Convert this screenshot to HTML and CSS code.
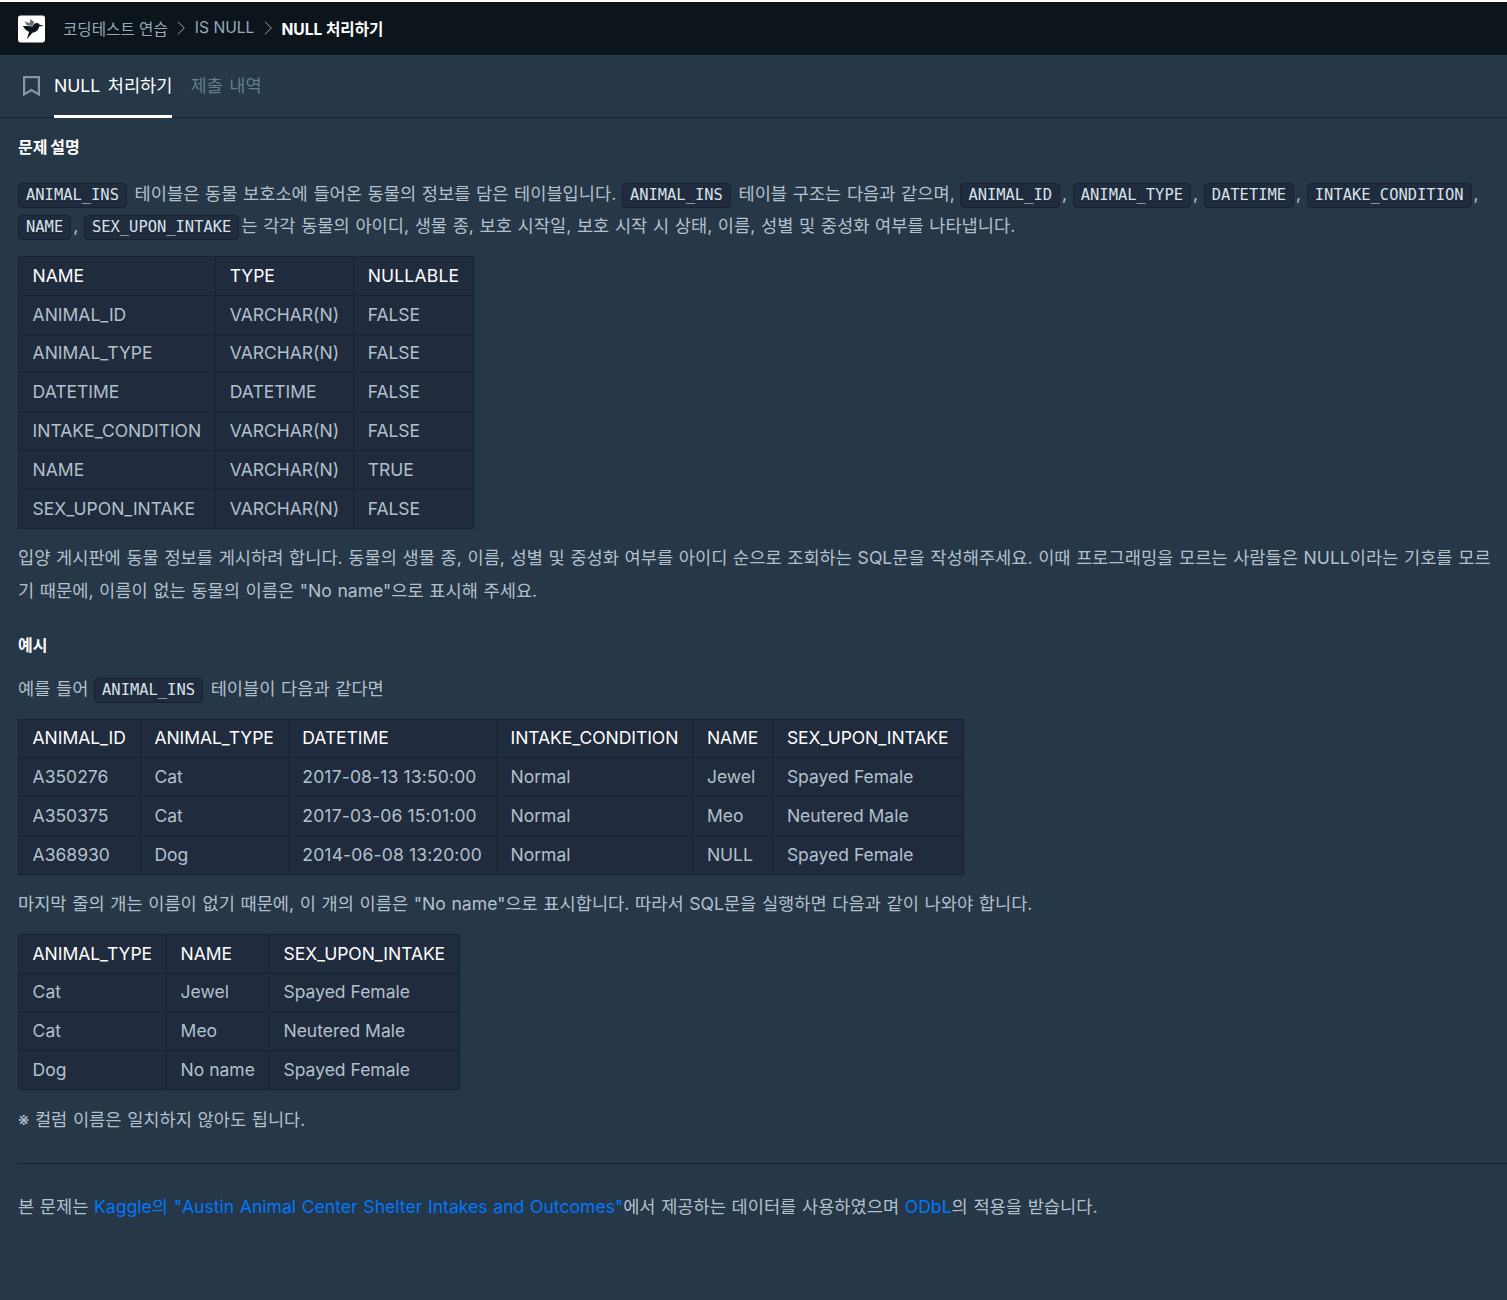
FILE: index.html
```html
<!DOCTYPE html>
<html lang="ko">
<head>
<meta charset="utf-8">
<title>NULL 처리하기</title>
<link rel="stylesheet" href="styles.css">
</head>
<body>
<header class="topbar">
  <svg class="logo" width="27" height="28" viewBox="0 0 28 28"><rect width="28" height="28" rx="2.5" fill="#fff"/><path d="M7 6 L12 8 L13 3.5 L17 7 L15 11 L9 10 Z" fill="#66727e"/><path d="M5 11 C8 11 12 11 15 11.5 C16 9 18 7.5 20 7.8 C21.5 8 22 9 22.5 9.5 L27 10.5 L22 11.5 C21.5 15 19 17.5 15 18 L9 24.5 L11.5 17 C8.5 16 6.5 13.5 5 11 Z" fill="#0c151c"/></svg>
  <nav class="crumbs">
    <span class="crumb">코딩테스트 연습</span>
    <svg class="chev" width="8" height="14" viewBox="0 0 8 14"><path d="M1 .7 L7.3 7 L1 13.3" fill="none" stroke="#98a8b9" stroke-width="1"/></svg>
    <span class="crumb">IS NULL</span>
    <svg class="chev" width="8" height="14" viewBox="0 0 8 14"><path d="M1 .7 L7.3 7 L1 13.3" fill="none" stroke="#98a8b9" stroke-width="1"/></svg>
    <span class="crumb current">NULL 처리하기</span>
  </nav>
</header>
<div class="tabs">
  <svg class="bookmark" width="17" height="20" viewBox="0 0 17 20"><path d="M1.1 1.1 H15.9 V18.4 L8.5 14 L1.1 18.4 Z" fill="none" stroke="#8297a7" stroke-width="2.2"/></svg>
  <div class="tab active">NULL 처리하기</div>
  <div class="tab">제출 내역</div>
</div>
<main class="content">
  <h5 class="heading first">문제 설명</h5>
  <p class="para lead"><code>ANIMAL_INS</code> 테이블은 동물 보호소에 들어온 동물의 정보를 담은 테이블입니다. <code>ANIMAL_INS</code> 테이블 구조는 다음과 같으며, <code>ANIMAL_ID</code>, <code>ANIMAL_TYPE</code>, <code>DATETIME</code>, <code>INTAKE_CONDITION</code>, <code>NAME</code>, <code>SEX_UPON_INTAKE</code>는 각각 동물의 아이디, 생물 종, 보호 시작일, 보호 시작 시 상태, 이름, 성별 및 중성화 여부를 나타냅니다.</p>
  <table class="tbl">
    <thead><tr><th>NAME</th><th>TYPE</th><th class="wide">NULLABLE</th></tr></thead>
    <tbody>
      <tr><td>ANIMAL_ID</td><td>VARCHAR(N)</td><td>FALSE</td></tr>
      <tr><td>ANIMAL_TYPE</td><td>VARCHAR(N)</td><td>FALSE</td></tr>
      <tr><td>DATETIME</td><td>DATETIME</td><td>FALSE</td></tr>
      <tr><td>INTAKE_CONDITION</td><td>VARCHAR(N)</td><td>FALSE</td></tr>
      <tr><td>NAME</td><td>VARCHAR(N)</td><td>TRUE</td></tr>
      <tr><td>SEX_UPON_INTAKE</td><td>VARCHAR(N)</td><td>FALSE</td></tr>
    </tbody>
  </table>
  <p class="para">입양 게시판에 동물 정보를 게시하려 합니다. 동물의 생물 종, 이름, 성별 및 중성화 여부를 아이디 순으로 조회하는 SQL문을 작성해주세요. 이때 프로그래밍을 모르는 사람들은 NULL이라는 기호를 모르기 때문에, 이름이 없는 동물의 이름은 "No name"으로 표시해 주세요.</p>
  <h5 class="heading">예시</h5>
  <p class="para lead">예를 들어 <code>ANIMAL_INS</code> 테이블이 다음과 같다면</p>
  <table class="tbl">
    <thead><tr><th>ANIMAL_ID</th><th>ANIMAL_TYPE</th><th>DATETIME</th><th>INTAKE_CONDITION</th><th>NAME</th><th>SEX_UPON_INTAKE</th></tr></thead>
    <tbody>
      <tr><td>A350276</td><td>Cat</td><td class="dt">2017-08-13 13:50:00</td><td>Normal</td><td>Jewel</td><td>Spayed Female</td></tr>
      <tr><td>A350375</td><td>Cat</td><td class="dt">2017-03-06 15:01:00</td><td>Normal</td><td>Meo</td><td>Neutered Male</td></tr>
      <tr><td>A368930</td><td>Dog</td><td class="dt">2014-06-08 13:20:00</td><td>Normal</td><td>NULL</td><td>Spayed Female</td></tr>
    </tbody>
  </table>
  <p class="para">마지막 줄의 개는 이름이 없기 때문에, 이 개의 이름은 "No name"으로 표시합니다. 따라서 SQL문을 실행하면 다음과 같이 나와야 합니다.</p>
  <table class="tbl">
    <thead><tr><th>ANIMAL_TYPE</th><th>NAME</th><th>SEX_UPON_INTAKE</th></tr></thead>
    <tbody>
      <tr><td>Cat</td><td>Jewel</td><td>Spayed Female</td></tr>
      <tr><td>Cat</td><td>Meo</td><td>Neutered Male</td></tr>
      <tr><td>Dog</td><td>No name</td><td>Spayed Female</td></tr>
    </tbody>
  </table>
  <p class="para note">※ 컬럼 이름은 일치하지 않아도 됩니다.</p>
  <hr class="rule">
  <p class="para">본 문제는 <a href="#">Kaggle의 "Austin Animal Center Shelter Intakes and Outcomes"</a>에서 제공하는 데이터를 사용하였으며 <a href="#">ODbL</a>의 적용을 받습니다.</p>
</main>
</body>
</html>
```
FILE: styles.css
```css
* { box-sizing: border-box; }
html, body { margin: 0; padding: 0; }
body {
  min-height: 1300px;
  background: #263747;
  color: #b2c0cc;
  font-family: Inter, "Noto Sans CJK KR", sans-serif;
  font-size: 17.6px;
  border-top: 2px solid #fff;
}
.topbar {
  display: flex;
  align-items: center;
  height: 53px;
  padding-left: 18px;
  background: #0c151c;
}
.logo { flex: none; }
.crumbs { display: flex; align-items: center; margin-left: 18px; padding-bottom: 2px; font-size: 15.6px; color: #98a8b9; gap: 9.5px; }
.crumb.current { color: #fff; font-weight: 700; }
.chev { flex: none; }
.tabs {
  display: flex;
  height: 63px;
  padding-left: 23px;
  border-bottom: 1px solid #172334;
}
.bookmark { flex: none; align-self: center; margin-right: 14px; }
.tab {
  display: flex;
  align-items: center;
  margin: 0 18px -1px 0;
  padding-bottom: 2px;
  color: #5f7f90;
  word-spacing: 1.5px;
  border-bottom: 3px solid transparent;
}
.tab.active { color: #fff; word-spacing: 2.5px; border-bottom-color: #fff; }
.content { padding: 0 12px 0 18px; }
.heading { margin: 26px 0 16px; color: #fff; font-size: 16px; font-weight: 700; line-height: 24px; }
.heading.first { margin: 0 0 19px; padding-top: 17px; word-spacing: -1px; }
.para { margin: 0 0 14px; line-height: 33px; word-spacing: .7px; }
.para.lead { line-height: 32px; }
.para.note { margin-top: 13px; }
code {
  display: inline-block;
  margin: -2px 2px -2px 0;
  font-family: "DejaVu Sans Mono", monospace;
  font-size: 15.45px;
  line-height: 23px;
  padding: 0 7px;
  word-spacing: 0;
  color: #d7e2eb;
  background: #202b3d;
  border: 1px solid #172334;
  border-radius: 4px;
}
.tbl { border-collapse: collapse; background: #202b3d; margin: 0 0 12px; font-size: 17.5px; }
.tbl th, .tbl td {
  border: 1px solid #172334;
  padding: 0 14px 1px 13.6px;
  height: 38.8px;
  text-align: left;
  font-weight: 400;
  white-space: nowrap;
}
.tbl th { color: #fff; letter-spacing: -.05px; }
.tbl .wide { letter-spacing: .2px; }
.tbl .dt { letter-spacing: .15px; }
.rule { border: 0; border-top: 1px solid #172334; margin: 27px -12px 26px 0; }
a { color: #0078ff; text-decoration: none; }
```
